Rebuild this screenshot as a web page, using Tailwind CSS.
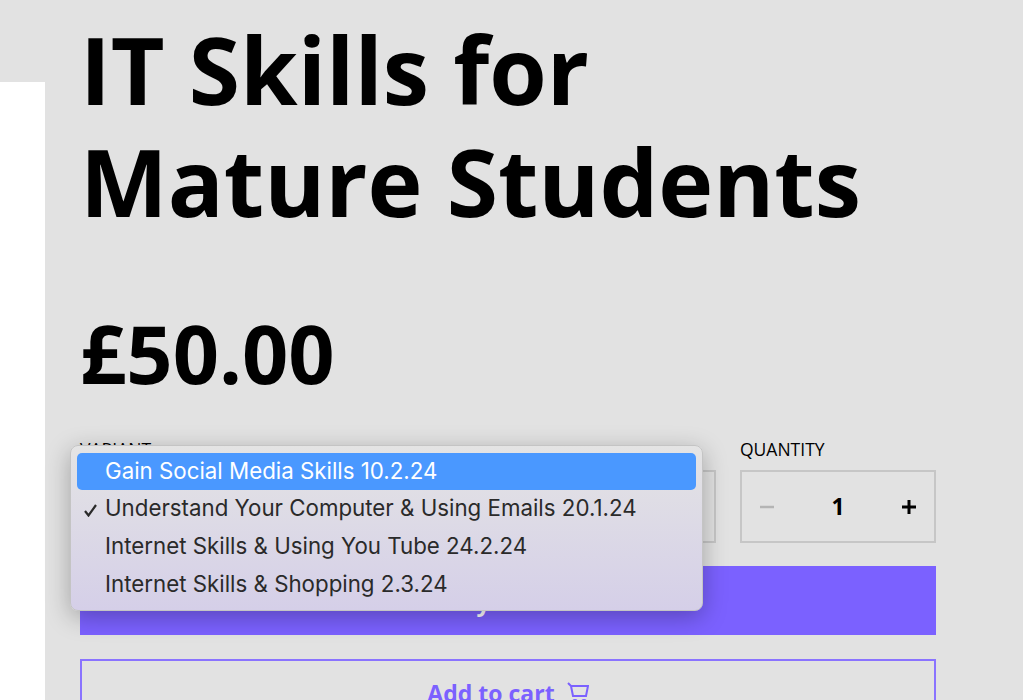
<!DOCTYPE html>
<html lang="en">
<head>
  <meta charset="UTF-8" />
  <meta name="viewport" content="width=device-width, initial-scale=1.0" />
  <title>IT Skills for Mature Students</title>
  <script src="https://cdn.jsdelivr.net/npm/@tailwindcss/browser@4"></script>
</head>
<body class="bg-[#e2e2e2] font-['Open_Sans',sans-serif] text-black">
  <div class="relative flex h-[700px] overflow-hidden">

    <!-- Product image edge -->
    <div class="mt-[82px] h-[618px] w-[45px] shrink-0 bg-white"></div>

    <!-- Product info -->
    <div class="ml-[35px] w-[856px] shrink-0">
      <h1 class="mt-[13px] text-[93px] leading-[112px] font-bold">IT Skills for<br />Mature Students</h1>
      <p class="mt-[66px] text-[81px] leading-[100px] font-bold">£50.00</p>

      <div class="mt-[34px] flex gap-6">
        <div class="w-[636px]">
          <p class="text-[17.5px] leading-[24px]">VARIANT</p>
          <div class="mt-[9px] h-[73px] border-2 border-[#c6c6c6]"></div>
        </div>
        <div class="w-[196px]">
          <p class="text-[17.5px] leading-[24px]">QUANTITY</p>
          <div class="mt-[9px] flex h-[73px] items-center justify-between border-2 border-[#c6c6c6] px-[17px]">
            <svg class="h-4 w-4" viewBox="0 0 16 16"><path d="M1 8h14" stroke="#b4b4b4" stroke-width="2.5" /></svg>
            <span class="text-[23px] font-bold">1</span>
            <svg class="h-4 w-4" viewBox="0 0 16 16"><path d="M1 8h14M8 1v14" stroke="#000" stroke-width="3" /></svg>
          </div>
        </div>
      </div>

      <button class="mt-[23px] flex h-[69px] w-full items-center justify-center bg-[#7b61ff] pt-[2px] text-[24px] font-bold text-white">Buy it now</button>

      <div class="mt-[24px] flex h-[69px] w-full items-start justify-center gap-3 border-2 border-[#8a73ff] pt-[15px] text-[23px] font-bold text-[#7b61ff]">
        Add to cart
        <svg class="mt-[6px] h-[26px] w-[22px]" viewBox="0 0 22 26" fill="none" stroke="#7b61ff" stroke-width="2">
          <path d="M1 1l3 3h17l-2 10H6L4 4" />
          <circle cx="8" cy="20" r="2" />
          <circle cx="17" cy="20" r="2" />
        </svg>
      </div>
    </div>

    <!-- Native select menu -->
    <div class="absolute top-[445px] left-[70px] w-[633px] rounded-lg border border-[#c4c4c4] bg-gradient-to-b from-[#e4e4e4] to-[#d5cfe8] px-[6px] pt-[7px] pb-[6px] font-['Inter',sans-serif] text-[22.3px] text-[#2a2a2a] shadow-[0_6px_24px_rgba(0,0,0,0.28)]">
      <div class="flex h-[37px] items-center rounded-[5px] bg-[#4a98ff] pb-[2px] pl-[28px] text-white">Gain Social Media Skills 10.2.24</div>
      <div class="relative flex h-[38px] items-center pb-[2px] pl-[28px]">
        <svg class="absolute top-[14px] left-[7px] h-[13px] w-[13px]" viewBox="0 0 13 13" fill="none" stroke="#2a2a2a" stroke-width="2.2"><path d="M1 7l3.5 4.5L12 1" /></svg>
        Understand Your Computer &amp; Using Emails 20.1.24
      </div>
      <div class="flex h-[38px] items-center pb-[2px] pl-[28px]">Internet Skills &amp; Using You Tube 24.2.24</div>
      <div class="flex h-[38px] items-center pb-[2px] pl-[28px]">Internet Skills &amp; Shopping 2.3.24</div>
    </div>
  </div>
</body>
</html>
